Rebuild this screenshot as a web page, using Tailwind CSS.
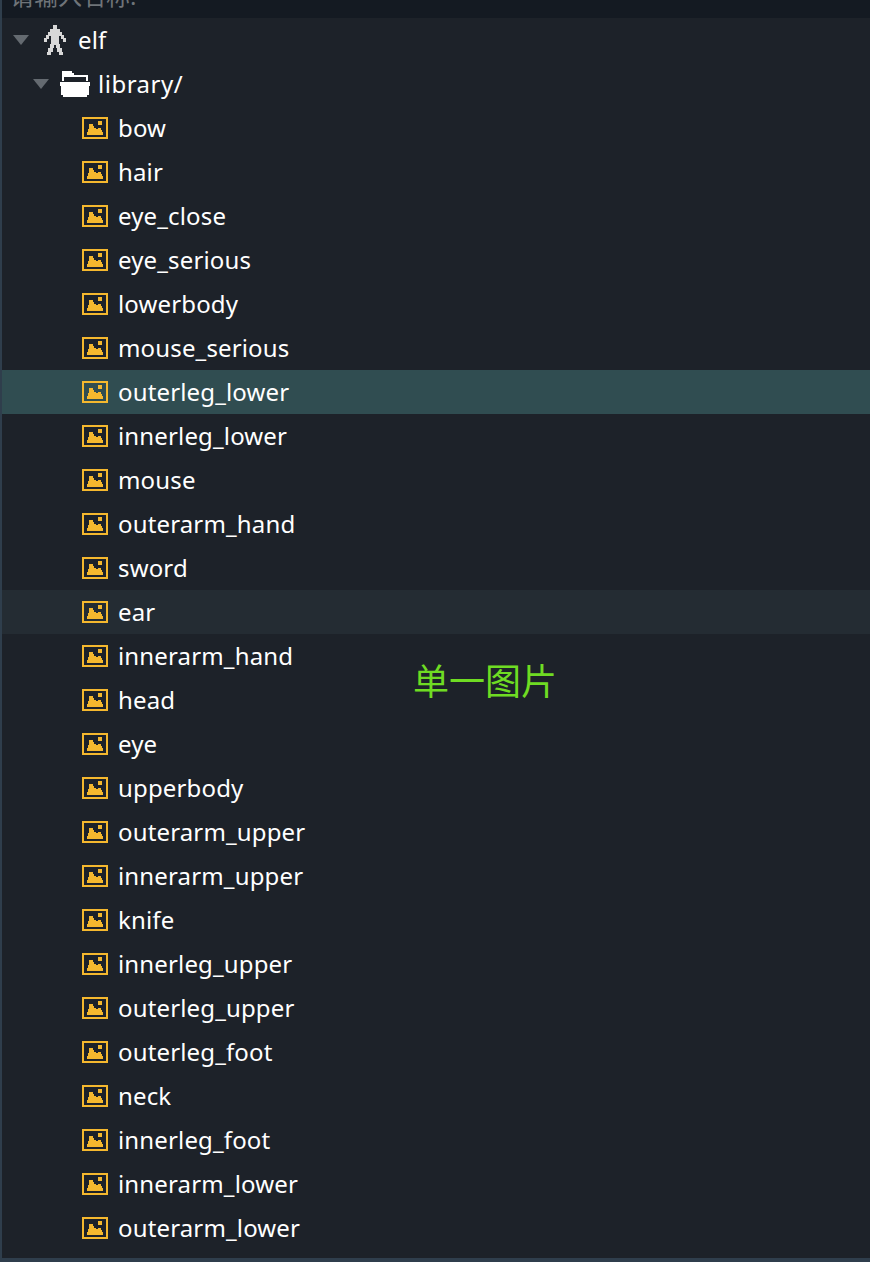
<!DOCTYPE html>
<html lang="zh">
<head>
    <meta charset="UTF-8">
    <title>library</title>
    <script src="https://cdn.jsdelivr.net/npm/@tailwindcss/browser@4"></script>
</head>
<body class="bg-[#1d2229] font-['Noto_Sans','Noto_Sans_CJK_SC',sans-serif] overflow-hidden">
    <svg class="hidden">
        <symbol id="img" viewBox="0 0 26 22" shape-rendering="crispEdges">
            <rect x="1" y="1" width="24" height="20" fill="none" stroke="#f5b82e" stroke-width="2"/>
            <path fill="#f5b82e" d="M16 4h4v4h-4zM7 7h4v2h1v2h2v1h2v-1h3v2h1v2h1v3H5v-3h1v-3h1z"/>
        </symbol>
    </svg>

    <div class="relative w-[870px] h-[1262px] border-l-2 border-b-4 border-[#2f3e4c] overflow-hidden">
        <div class="h-[18px] bg-[#141a22] overflow-hidden pl-2">
            <div class="-mt-[21px] h-[33px] leading-[33px] text-[24px] text-[#6f7479]">请输入名称:</div>
        </div>

        <div class="text-white text-[24px] tracking-[0.15px]">
            <div class="h-11 flex items-center pl-[11px]">
                <div class="w-[16px] h-[10px] bg-[#646a70] [clip-path:polygon(0_0,100%_0,50%_100%)]"></div>
                <svg class="ml-[15px] w-[22px] h-[30px]" viewBox="0 0 22 30" shape-rendering="crispEdges">
                    <polygon fill="#d8d8d8" points="13,0 13,4 16,4 16,7 18,7 18,10 20,10 20,13 22,13 22,17 19,17 19,14 17,14 17,11 15,11 15,19 16,19 16,23 18,23 18,27 19,27 19,30 15,30 15,27 13,27 13,23 12,23 12,20 10,20 10,23 9,23 9,27 7,27 7,30 3,30 3,27 4,27 4,23 6,23 6,19 7,19 7,11 5,11 5,14 3,14 3,17 0,17 0,13 2,13 2,10 4,10 4,7 6,7 6,4 9,4 9,0"/>
                </svg>
                <span class="ml-[12px]">elf</span>
            </div>
            <div class="h-11 flex items-center pl-[31px]">
                <div class="w-[16px] h-[10px] bg-[#646a70] [clip-path:polygon(0_0,100%_0,50%_100%)]"></div>
                <svg class="ml-[11px] w-[30px] h-[26px]" viewBox="0 0 30 26" shape-rendering="crispEdges">
                    <path fill="#fff" d="M2 0h10v2h2v2h14v6h-2V6H4v4H2zM0 11h30v4h-1v9h-2v2H3v-2H1v-9H0z"/>
                </svg>
                <span class="ml-[8px] tracking-[0.5px]">library/</span>
            </div>

            <div class="h-11 flex items-center pl-[80px]"><svg class="w-[26px] h-[22px]"><use href="#img"/></svg><span class="ml-[10px]">bow</span></div>
            <div class="h-11 flex items-center pl-[80px]"><svg class="w-[26px] h-[22px]"><use href="#img"/></svg><span class="ml-[10px]">hair</span></div>
            <div class="h-11 flex items-center pl-[80px]"><svg class="w-[26px] h-[22px]"><use href="#img"/></svg><span class="ml-[10px]">eye_close</span></div>
            <div class="h-11 flex items-center pl-[80px]"><svg class="w-[26px] h-[22px]"><use href="#img"/></svg><span class="ml-[10px]">eye_serious</span></div>
            <div class="h-11 flex items-center pl-[80px]"><svg class="w-[26px] h-[22px]"><use href="#img"/></svg><span class="ml-[10px]">lowerbody</span></div>
            <div class="h-11 flex items-center pl-[80px]"><svg class="w-[26px] h-[22px]"><use href="#img"/></svg><span class="ml-[10px]">mouse_serious</span></div>
            <div class="h-11 flex items-center pl-[80px] bg-[#304d51]"><svg class="w-[26px] h-[22px]"><use href="#img"/></svg><span class="ml-[10px]">outerleg_lower</span></div>
            <div class="h-11 flex items-center pl-[80px]"><svg class="w-[26px] h-[22px]"><use href="#img"/></svg><span class="ml-[10px]">innerleg_lower</span></div>
            <div class="h-11 flex items-center pl-[80px]"><svg class="w-[26px] h-[22px]"><use href="#img"/></svg><span class="ml-[10px]">mouse</span></div>
            <div class="h-11 flex items-center pl-[80px]"><svg class="w-[26px] h-[22px]"><use href="#img"/></svg><span class="ml-[10px]">outerarm_hand</span></div>
            <div class="h-11 flex items-center pl-[80px]"><svg class="w-[26px] h-[22px]"><use href="#img"/></svg><span class="ml-[10px]">sword</span></div>
            <div class="h-11 flex items-center pl-[80px] bg-[#242c33]"><svg class="w-[26px] h-[22px]"><use href="#img"/></svg><span class="ml-[10px]">ear</span></div>
            <div class="h-11 flex items-center pl-[80px]"><svg class="w-[26px] h-[22px]"><use href="#img"/></svg><span class="ml-[10px]">innerarm_hand</span></div>
            <div class="h-11 flex items-center pl-[80px]"><svg class="w-[26px] h-[22px]"><use href="#img"/></svg><span class="ml-[10px]">head</span></div>
            <div class="h-11 flex items-center pl-[80px]"><svg class="w-[26px] h-[22px]"><use href="#img"/></svg><span class="ml-[10px]">eye</span></div>
            <div class="h-11 flex items-center pl-[80px]"><svg class="w-[26px] h-[22px]"><use href="#img"/></svg><span class="ml-[10px]">upperbody</span></div>
            <div class="h-11 flex items-center pl-[80px]"><svg class="w-[26px] h-[22px]"><use href="#img"/></svg><span class="ml-[10px]">outerarm_upper</span></div>
            <div class="h-11 flex items-center pl-[80px]"><svg class="w-[26px] h-[22px]"><use href="#img"/></svg><span class="ml-[10px]">innerarm_upper</span></div>
            <div class="h-11 flex items-center pl-[80px]"><svg class="w-[26px] h-[22px]"><use href="#img"/></svg><span class="ml-[10px]">knife</span></div>
            <div class="h-11 flex items-center pl-[80px]"><svg class="w-[26px] h-[22px]"><use href="#img"/></svg><span class="ml-[10px]">innerleg_upper</span></div>
            <div class="h-11 flex items-center pl-[80px]"><svg class="w-[26px] h-[22px]"><use href="#img"/></svg><span class="ml-[10px]">outerleg_upper</span></div>
            <div class="h-11 flex items-center pl-[80px]"><svg class="w-[26px] h-[22px]"><use href="#img"/></svg><span class="ml-[10px]">outerleg_foot</span></div>
            <div class="h-11 flex items-center pl-[80px]"><svg class="w-[26px] h-[22px]"><use href="#img"/></svg><span class="ml-[10px]">neck</span></div>
            <div class="h-11 flex items-center pl-[80px]"><svg class="w-[26px] h-[22px]"><use href="#img"/></svg><span class="ml-[10px]">innerleg_foot</span></div>
            <div class="h-11 flex items-center pl-[80px]"><svg class="w-[26px] h-[22px]"><use href="#img"/></svg><span class="ml-[10px]">innerarm_lower</span></div>
            <div class="h-11 flex items-center pl-[80px]"><svg class="w-[26px] h-[22px]"><use href="#img"/></svg><span class="ml-[10px]">outerarm_lower</span></div>
        </div>

        <div class="absolute left-[411px] top-[655px] text-[36px] leading-[48px] text-[#6fdc23] whitespace-nowrap font-['Noto_Sans_CJK_SC',sans-serif]">单一图片</div>
    </div>
</body>
</html>
